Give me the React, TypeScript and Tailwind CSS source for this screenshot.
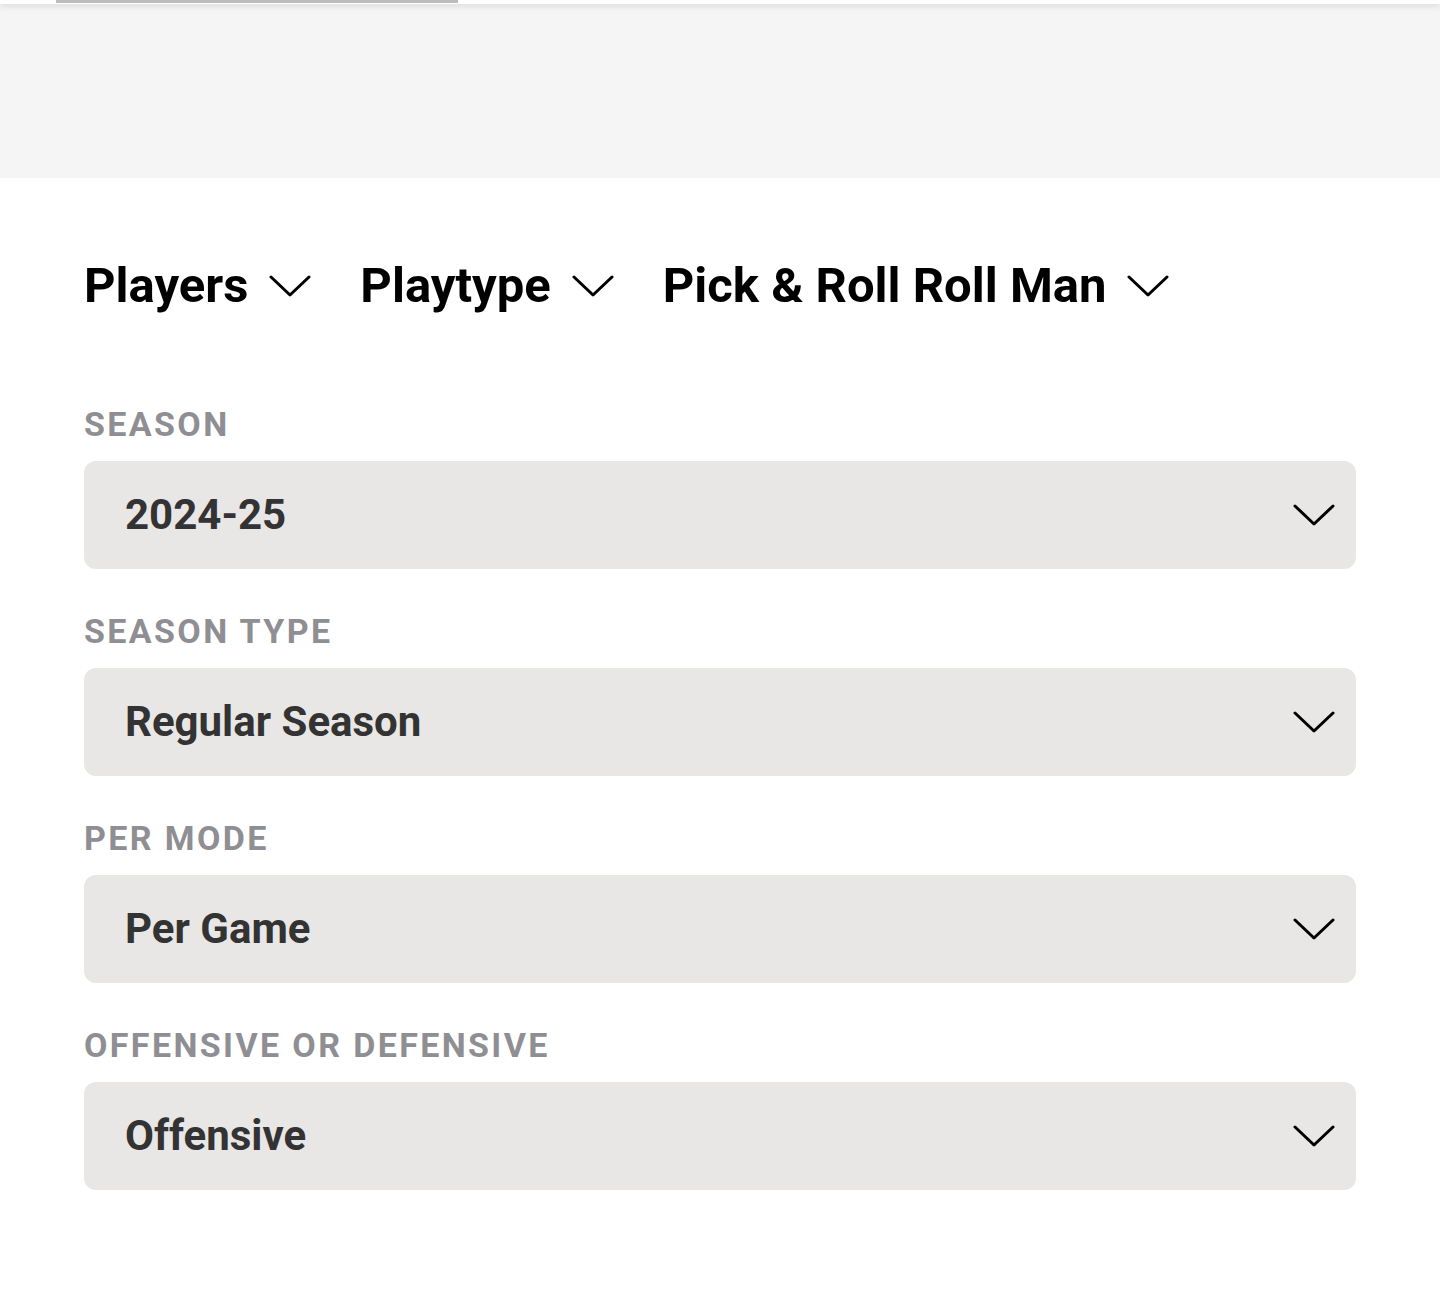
import React from "react";

function Chevron({ className }: { className?: string }) {
  return (
    <svg viewBox="0 0 42 22" className={className} fill="none">
      <path d="M2 2 L21 20 L40 2" stroke="currentColor" strokeWidth="3" strokeLinecap="round" strokeLinejoin="round" />
    </svg>
  );
}

const filters = [
  { label: "SEASON", value: "2024-25" },
  { label: "SEASON TYPE", value: "Regular Season" },
  { label: "PER MODE", value: "Per Game" },
  { label: "OFFENSIVE OR DEFENSIVE", value: "Offensive" },
];

const crumbs = ["Players", "Playtype", "Pick & Roll Roll Man"];

export default function App() {
  return (
    <div className="min-h-[1296px] bg-white" style={{ fontFamily: "Roboto, 'Liberation Sans', sans-serif" }}>
      {/* top strip + grey banner */}
      <div className="relative z-10 h-[4px] bg-white shadow-[0_2px_6px_rgba(0,0,0,0.14)]">
        <div className="ml-[56px] h-[3px] w-[402px] bg-[#bdbdbd]" />
      </div>
      <div className="h-[174px] bg-[#f5f5f5]" />

      <div className="px-[84px] pt-[83px]">
        {/* breadcrumb dropdowns */}
        <div className="flex items-center gap-[49px]">
          {crumbs.map((c) => (
            <div key={c} className="flex items-center gap-[21px]">
              <span className="text-[49px] font-bold leading-none text-black">{c}</span>
              <Chevron className="h-[22px] w-[42px] text-black" />
            </div>
          ))}
        </div>

        {/* filter selects */}
        <div className="mt-[97px] flex flex-col gap-[45px]">
          {filters.map((f) => (
            <div key={f.label} className="flex flex-col gap-[20px]">
              <span className="text-[34px] font-bold uppercase leading-none tracking-[0.07em] text-[#8e8e93]">
                {f.label}
              </span>
              <div className="flex h-[108px] items-center justify-between rounded-[12px] bg-[#e8e7e6] pl-[41px] pr-[21px]">
                <span className="text-[42px] font-bold leading-none text-[#333333]">{f.value}</span>
                <Chevron className="h-[22px] w-[42px] text-black" />
              </div>
            </div>
          ))}
        </div>
      </div>
    </div>
  );
}
